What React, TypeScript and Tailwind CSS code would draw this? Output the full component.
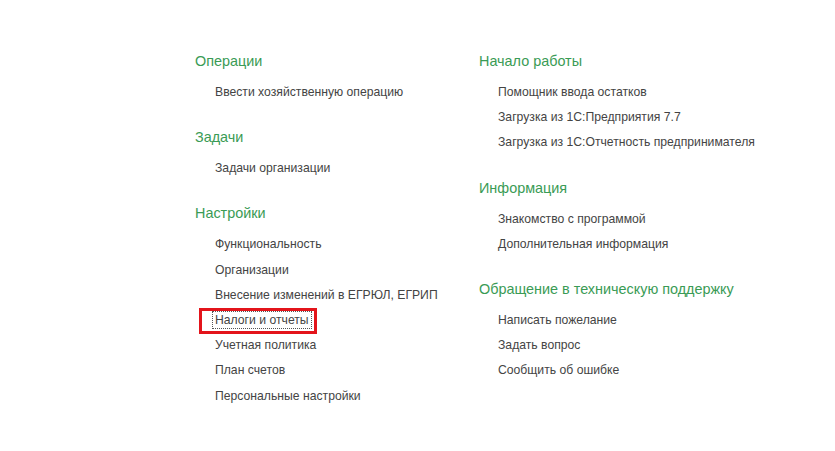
import * as React from "react";

type Section = { title: string; items: string[] };

const LEFT: Section[] = [
  { title: "Операции", items: ["Ввести хозяйственную операцию"] },
  { title: "Задачи", items: ["Задачи организации"] },
  {
    title: "Настройки",
    items: [
      "Функциональность",
      "Организации",
      "Внесение изменений в ЕГРЮЛ, ЕГРИП",
      "Налоги и отчеты",
      "Учетная политика",
      "План счетов",
      "Персональные настройки",
    ],
  },
];

const RIGHT: Section[] = [
  {
    title: "Начало работы",
    items: [
      "Помощник ввода остатков",
      "Загрузка из 1С:Предприятия 7.7",
      "Загрузка из 1С:Отчетность предпринимателя",
    ],
  },
  { title: "Информация", items: ["Знакомство с программой", "Дополнительная информация"] },
  {
    title: "Обращение в техническую поддержку",
    items: ["Написать пожелание", "Задать вопрос", "Сообщить об ошибке"],
  },
];

const HIGHLIGHT = "Налоги и отчеты";

function SectionBlock({ section, indent }: { section: Section; indent: string }) {
  return (
    <div>
      <div className="h-[20px] text-[14.4px] leading-[20px] text-[#3a9b55]">{section.title}</div>
      <ul className={"mt-[9px] " + indent}>
        {section.items.map((item) => (
          <li key={item} className="relative h-[25.2px] text-[12.2px] leading-[25px] text-[#444]">
            {item === HIGHLIGHT ? (
              <>
                <span className="-ml-[3px] border border-dotted border-[#555] px-[2px] py-[1px]">
                  {item}
                </span>
                <span className="pointer-events-none absolute left-[-16px] top-0 h-[26px] w-[118px] border-[3px] border-[#e3141b]" />
              </>
            ) : (
              item
            )}
          </li>
        ))}
      </ul>
    </div>
  );
}

export default function App() {
  return (
    <div
      className="h-[451px] w-[835px] bg-white pl-[195px] pt-[51px]"
      style={{ fontFamily: '"Liberation Sans", Arial, sans-serif' }}
    >
      <div className="flex">
        <div className="flex w-[284px] flex-col gap-[22px]">
          {LEFT.map((s) => (
            <SectionBlock key={s.title} section={s} indent="pl-[20px]" />
          ))}
        </div>
        <div className="flex flex-col gap-[22px]">
          {RIGHT.map((s) => (
            <SectionBlock key={s.title} section={s} indent="pl-[19px]" />
          ))}
        </div>
      </div>
    </div>
  );
}
